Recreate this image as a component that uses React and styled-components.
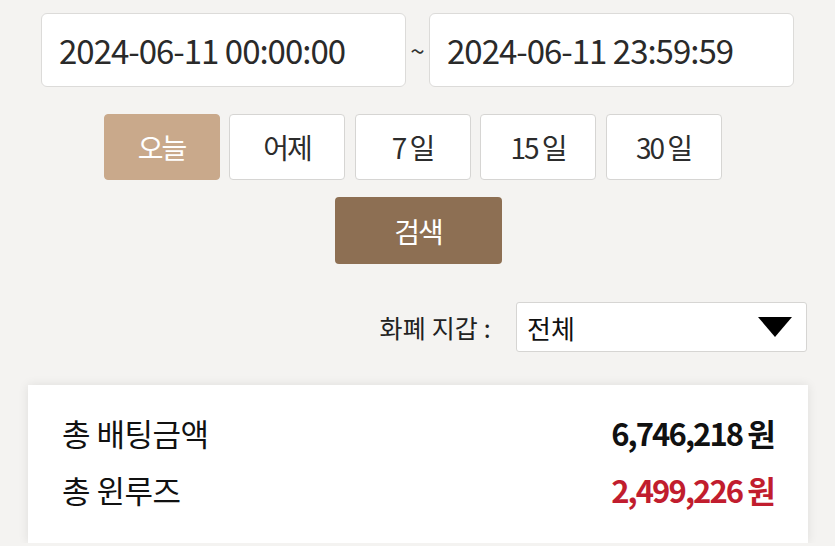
import React from "react";
import styled, { createGlobalStyle } from "styled-components";

const Global = createGlobalStyle`
  html, body { margin: 0; padding: 0; background: #f4f3f1; }
  body { font-family: "Noto Sans CJK KR", "Noto Sans", sans-serif; color: #222; overflow: hidden; }
  * { box-sizing: border-box; }
`;

const Page = styled.div`
  padding-top: 13px;
  width: 835px;
`;

const DateRow = styled.div`
  display: flex;
  justify-content: center;
  align-items: center;
`;

const DateInput = styled.div`
  width: 365px;
  height: 74px;
  background: #fff;
  border: 1px solid #dcdbd9;
  border-radius: 6px;
  display: flex;
  align-items: center;
  padding-left: 17px;
  font-size: 33px;
  letter-spacing: -1px;
  color: #2a2a2a;
`;

const Tilde = styled.span`
  width: 23px;
  text-align: center;
  font-size: 26px;
  color: #333;
  margin-top: -2px;
`;

const QuickRow = styled.div`
  display: flex;
  justify-content: center;
  gap: 9.5px;
  margin-top: 27px;
  padding-right: 10px;
`;

const QuickBtn = styled.button`
  width: 116px;
  height: 66px;
  border-radius: 4px;
  border: 1px solid ${(p) => (p.$active ? "#c9a98b" : "#d6d5d3")};
  background: ${(p) => (p.$active ? "#c9a98b" : "#fff")};
  color: ${(p) => (p.$active ? "#fff" : "#2c2c2c")};
  font-family: inherit;
  font-size: 28px;
  letter-spacing: -2px;
  padding: 0;
`;

const SearchRow = styled.div`
  display: flex;
  justify-content: center;
  margin-top: 17px;
  padding-left: 1px;
`;

const SearchBtn = styled.button`
  width: 167px;
  height: 67px;
  border: none;
  border-radius: 4px;
  background: #8d6f53;
  color: #fff;
  font-family: inherit;
  font-size: 28px;
  letter-spacing: -2px;
`;

const FilterRow = styled.div`
  display: flex;
  justify-content: flex-end;
  align-items: center;
  margin-top: 38px;
  padding-right: 28px;
`;

const Label = styled.span`
  font-size: 25px;
  color: #222;
  margin-right: 25px;
  letter-spacing: 0.2px;
  white-space: pre;
`;

const Select = styled.div`
  width: 291px;
  height: 50px;
  background: #fff;
  border: 1px solid #d6d5d3;
  border-radius: 3px;
  display: flex;
  align-items: center;
  justify-content: space-between;
  padding: 0 14px 0 10px;
  font-size: 26px;
  color: #111;
`;

const Card = styled.div`
  margin: 33px 27px 0 28px;
  height: 158px;
  background: #fff;
  box-shadow: 0 0 10px rgba(0, 0, 0, 0.09);
  padding: 19px 34px 0 34px;
`;

const Row = styled.div`
  display: flex;
  justify-content: space-between;
  align-items: center;
  height: 57px;
`;

const RowLabel = styled.span`
  font-size: 31px;
  color: #111;
  letter-spacing: -0.5px;
`;

const RowValue = styled.span`
  font-size: 31px;
  font-weight: 700;
  letter-spacing: -1.9px;
  color: ${(p) => (p.$red ? "#c11d2e" : "#111")};
`;

const quick = ["오늘", "어제", "7 일", "15 일", "30 일"];

export default function App() {
  return (
    <>
      <Global />
      <Page>
        <DateRow>
          <DateInput>2024-06-11 00:00:00</DateInput>
          <Tilde>~</Tilde>
          <DateInput>2024-06-11 23:59:59</DateInput>
        </DateRow>
        <QuickRow>
          {quick.map((q, i) => (
            <QuickBtn key={q} $active={i === 0}>
              {q}
            </QuickBtn>
          ))}
        </QuickRow>
        <SearchRow>
          <SearchBtn>검색</SearchBtn>
        </SearchRow>
        <FilterRow>
          <Label>화폐 지갑 :</Label>
          <Select>
            <span>전체</span>
            <svg width="34" height="20" viewBox="0 0 34 20">
              <polygon points="0,0 34,0 17,20" fill="#000" />
            </svg>
          </Select>
        </FilterRow>
        <Card>
          <Row>
            <RowLabel>총 배팅금액</RowLabel>
            <RowValue>6,746,218 원</RowValue>
          </Row>
          <Row>
            <RowLabel>총 윈루즈</RowLabel>
            <RowValue $red>2,499,226 원</RowValue>
          </Row>
        </Card>
      </Page>
    </>
  );
}
